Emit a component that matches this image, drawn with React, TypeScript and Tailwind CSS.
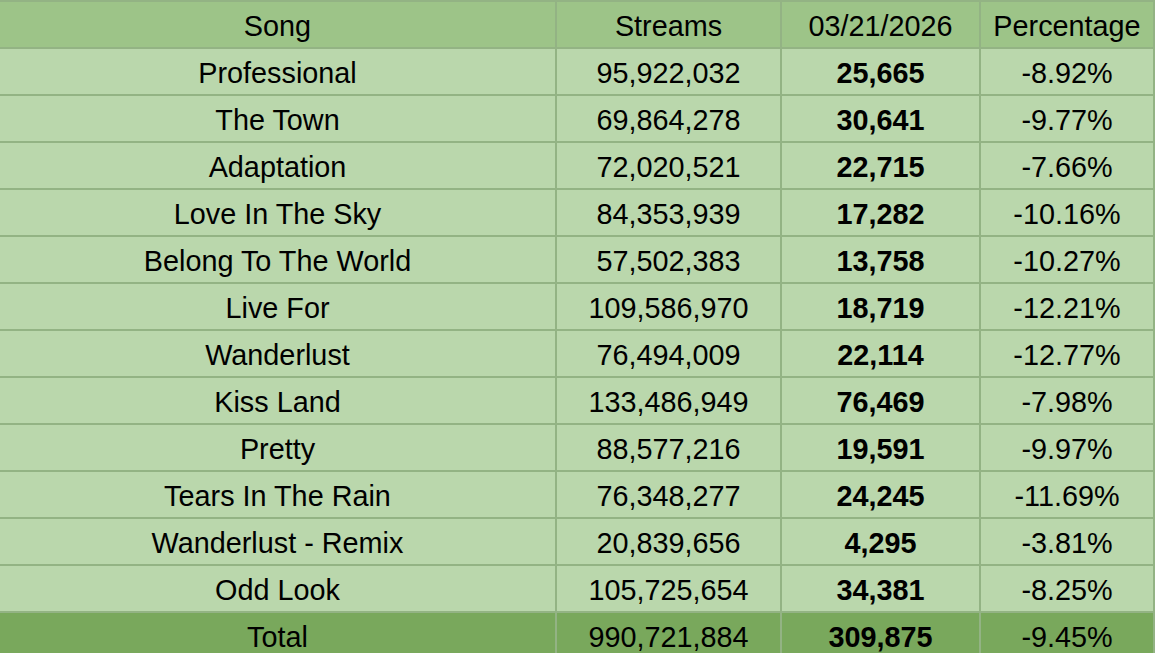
import React from 'react';

interface Row {
  song: string;
  streams: string;
  daily: string;
  pct: string;
}

const rows: Row[] = [
  { song: 'Professional', streams: '95,922,032', daily: '25,665', pct: '-8.92%' },
  { song: 'The Town', streams: '69,864,278', daily: '30,641', pct: '-9.77%' },
  { song: 'Adaptation', streams: '72,020,521', daily: '22,715', pct: '-7.66%' },
  { song: 'Love In The Sky', streams: '84,353,939', daily: '17,282', pct: '-10.16%' },
  { song: 'Belong To The World', streams: '57,502,383', daily: '13,758', pct: '-10.27%' },
  { song: 'Live For', streams: '109,586,970', daily: '18,719', pct: '-12.21%' },
  { song: 'Wanderlust', streams: '76,494,009', daily: '22,114', pct: '-12.77%' },
  { song: 'Kiss Land', streams: '133,486,949', daily: '76,469', pct: '-7.98%' },
  { song: 'Pretty', streams: '88,577,216', daily: '19,591', pct: '-9.97%' },
  { song: 'Tears In The Rain', streams: '76,348,277', daily: '24,245', pct: '-11.69%' },
  { song: 'Wanderlust - Remix', streams: '20,839,656', daily: '4,295', pct: '-3.81%' },
  { song: 'Odd Look', streams: '105,725,654', daily: '34,381', pct: '-8.25%' },
];

const cell = 'h-[47px] pt-[3px] flex items-center justify-center border-b-2 border-r-2 border-[#93b384]';

const App: React.FC = () => {
  return (
    <div className="w-[1155px] h-[653px] overflow-hidden bg-[#bad7ac] text-black text-[28.8px] leading-none" style={{ fontFamily: '"Liberation Sans", Arial, sans-serif' }}>
      <div className="grid grid-cols-[557px_225px_199px_174px] border-t-2 border-[#93b384]">
        {/* Header */}
        {['Song', 'Streams', '03/21/2026', 'Percentage'].map((h, i) => (
          <div key={h} className={`${cell} bg-[#9dc488] ${i === 3 ? 'border-r-0' : ''}`}>
            {h}
          </div>
        ))}

        {rows.map(r => (
          <React.Fragment key={r.song}>
            <div className={`${cell} bg-[#bad7ac]`}>{r.song}</div>
            <div className={`${cell} bg-[#bad7ac]`}>{r.streams}</div>
            <div className={`${cell} bg-[#bad7ac] font-bold`}>{r.daily}</div>
            <div className={`${cell} bg-[#bad7ac] border-r-0`}>{r.pct}</div>
          </React.Fragment>
        ))}

        {/* Total */}
        <div className={`${cell} bg-[#79a85c] border-[#6d9852]`}>Total</div>
        <div className={`${cell} bg-[#79a85c] border-[#6d9852]`}>990,721,884</div>
        <div className={`${cell} bg-[#79a85c] border-[#6d9852] font-bold`}>309,875</div>
        <div className={`${cell} bg-[#79a85c] border-[#6d9852] border-r-0`}>-9.45%</div>
      </div>
    </div>
  );
};

export default App;
